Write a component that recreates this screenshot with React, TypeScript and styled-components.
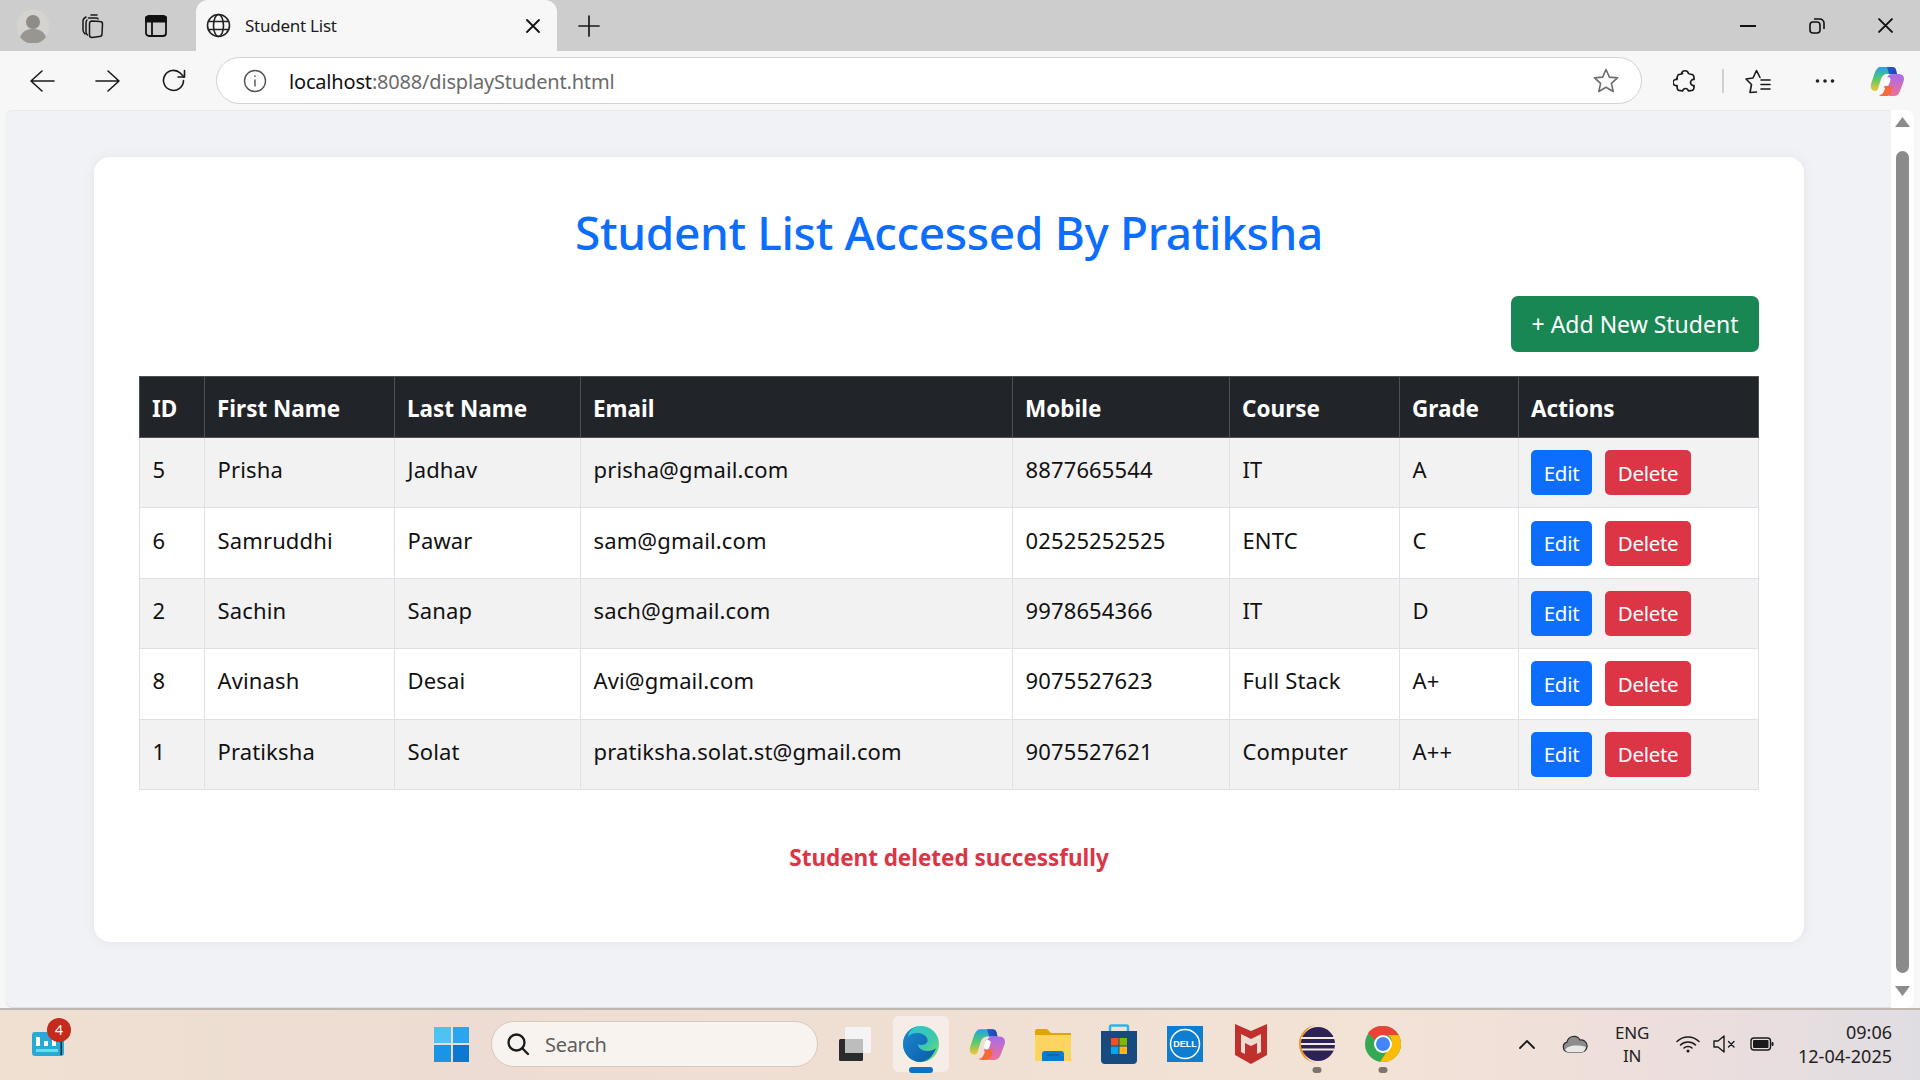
import React from "react";
import styled, { createGlobalStyle } from "styled-components";

const Global = createGlobalStyle`
  html, body { margin: 0; padding: 0; width: 1920px; height: 1080px; overflow: hidden; }
  body { font-family: "Noto Sans", "Open Sans", sans-serif; color: #212529; }
  * { box-sizing: border-box; }
`;

const Shell = styled.div`
  width: 1920px; height: 1080px; display: flex; flex-direction: column; overflow: hidden; background: #f7f7f7;
`;
const TabStrip = styled.div`
  height: 51px; flex: none; background: #cdcdcd; display: flex; align-items: center; padding-left: 7px; position: relative;
`;
const StripButton = styled.div<{ $w: number }>`
  width: ${p => p.$w}px; height: 51px; flex: none; display: flex; align-items: center; justify-content: center;
`;
const Tab = styled.div`
  width: 361px; height: 51px; flex: none; margin-left: 9px; background: #f7f7f7; border-radius: 12px 12px 0 0;
  display: flex; align-items: center; padding: 0 17px 0 10px;
`;
const TabTitle = styled.span`
  flex: 1; margin-left: 14px; font-size: 17px; letter-spacing: -0.25px; color: #1c1c1c;
`;
const WindowControls = styled.div`
  margin-left: auto; display: flex; height: 51px;
`;
const WinButton = styled.div`
  width: 69px; height: 51px; display: flex; align-items: center; justify-content: center;
`;
const Toolbar = styled.div`
  height: 59px; flex: none; background: #f7f7f7; display: flex; align-items: center; padding-left: 9px;
`;
const NavButton = styled.div`
  width: 66px; height: 46px; flex: none; display: flex; align-items: center; justify-content: center;
`;
const AddressBar = styled.div`
  width: 1426px; height: 47px; margin-left: 9px; flex: none; background: #fff; border: 1.5px solid #d2d2d2; border-radius: 24px;
  display: flex; align-items: center; padding: 0 22px 0 26px;
`;
const Url = styled.div`
  flex: 1; margin-left: 22px; padding-top: 1px; font-size: 20px; letter-spacing: -0.18px; color: #6b6b6b;
  b { font-weight: 400; color: #111; }
`;
const ToolSlot = styled.div<{ $w: number; $m?: number }>`
  width: ${p => p.$w}px; margin-left: ${p => p.$m ?? 0}px; height: 46px; flex: none; display: flex; align-items: center; justify-content: center;
`;
const ToolDivider = styled.div`
  width: 2px; height: 24px; flex: none; background: #d0d0d0;
`;
const Viewport = styled.div`
  flex: 1; min-height: 0; display: flex; background: #f7f7f7;
`;
const Page = styled.main`
  flex: 1; min-width: 0; margin-left: 5px; height: 898px; background: #f0f2f5; border-radius: 8px 0 0 8px; border-top: 1px solid #e9e9e9;
  border-bottom: 1px solid #dfdfdf; padding: 46px 87px 0 89px;
`;
const Card = styled.section`
  height: 785px; background: #fff; border-radius: 16px; padding: 44px 45px 0; box-shadow: 0 0 14px rgba(0,0,0,.06);
`;
const Title = styled.h1`
  margin: 0; height: 71px; line-height: 62px; text-align: center; font-size: 46px; font-weight: 500; letter-spacing: -0.35px; color: #0d6efd;
`;
const ActionRow = styled.div`
  display: flex; justify-content: flex-end; margin-top: 24px; height: 56px;
`;
const AddButton = styled.button`
  width: 248px; height: 56px; border: 0; border-radius: 7px; background: #198754; color: #fff; font: inherit; font-size: 23px; letter-spacing: 0;
`;
const Table = styled.table`
  width: 1619px; margin-top: 24px; border-collapse: collapse; table-layout: fixed; font-size: 22px; letter-spacing: 0.14px;
`;
const HeadCell = styled.th`
  height: 61px; padding: 2px 12px 0; text-align: left; background: #212529; color: #fff; border: 1.5px solid #4d5154; font-weight: 700; font-size: 22.5px; letter-spacing: 0;
`;
const Row = styled.tr<{ $odd: boolean }>`
  background: ${p => (p.$odd ? "#f2f2f2" : "#fff")};
`;
const Cell = styled.td`
  height: 70.4px; padding: 0 12px 7px 12.5px; border: 1.5px solid #dee2e6; color: #111;
`;
const ActionCell = styled(Cell)`
  padding: 0 12px;
`;
const ActionGroup = styled.div`
  display: flex; gap: 13px;
`;
const SmallButton = styled.button<{ $c: string; $w: number }>`
  width: ${p => p.$w}px; height: 45px; border: 0; border-radius: 5px; background: ${p => p.$c}; color: #fff; font: inherit; font-size: 20.5px; letter-spacing: -0.3px;
`;
const Message = styled.p`
  margin: 52px 0 0; text-align: center; font-size: 22.5px; font-weight: 700; letter-spacing: -0.04px; color: #dc3545;
`;
const Scrollbar = styled.div`
  width: 23px; flex: none; height: 898px; background: #fff; margin-right: 6px; border-radius: 0 8px 8px 0; padding-top: 7px;
  display: flex; flex-direction: column; align-items: center;
`;
const ScrollThumb = styled.div`
  width: 13px; height: 822px; margin: 24px 0 13px; border-radius: 7px; background: #8b8b8b;
`;
const Taskbar = styled.footer`
  height: 72px; flex: none; border-top: 2px solid #bfb7b1; display: flex; align-items: center; position: relative; padding-bottom: 2px;
  background: linear-gradient(90deg, #efe0d2 0%, #ecdcd3 25%, #f0e0d3 50%, #f3e2d6 72%, #ecdedd 88%, #e0dde2 100%);
`;
const Widgets = styled.div`
  width: 434px; flex: none; padding: 0 0 0 32px; display: flex; align-items: center; position: relative; height: 68px;
`;
const Badge = styled.span`
  position: absolute; left: 47px; top: 8px; width: 24px; height: 24px; border-radius: 50%; background: #c42b1c; color: #fff;
  font-size: 14px; line-height: 24px; text-align: center;
`;
const Start = styled.div`
  width: 35px; height: 35px; flex: none; display: grid; grid-template-columns: 1fr 1fr; gap: 2px;
`;
const Pane = styled.i<{ $c: string }>`
  display: block; background: ${p => p.$c};
`;
const Search = styled.div`
  width: 327px; height: 46px; margin-left: 22px; flex: none; border-radius: 23px; background: #f8f3ee; border: 1.5px solid #d5c9bf;
  display: flex; align-items: center; padding-left: 14px;
`;
const SearchText = styled.span`
  margin-left: 15px; font-size: 20px; letter-spacing: -0.3px; color: #5e5e5e;
`;
const Apps = styled.div`
  display: flex; align-items: center; margin-left: 4px; height: 68px;
`;
const AppSlot = styled.div<{ $active?: boolean }>`
  width: 66px; height: 56px; flex: none; display: flex; align-items: center; justify-content: center; position: relative;
  &::before { content: ""; position: absolute; inset: 0 5px; border-radius: 6px; background: ${p => (p.$active ? "#f6ede7" : "transparent")}; }
  > svg { position: relative; }
`;
const Dot = styled.span<{ $active?: boolean }>`
  position: absolute; bottom: -1px; left: 50%; transform: translateX(-50%); height: 6px; border-radius: 3px;
  width: ${p => (p.$active ? 24 : 9)}px; background: ${p => (p.$active ? "#0a72c9" : "#7c756f")};
`;
const Tray = styled.div`
  margin-left: auto; display: flex; align-items: center; padding-right: 28px; height: 68px;
`;
const TrayIcon = styled.div<{ $w: number }>`
  width: ${p => p.$w}px; display: flex; justify-content: center; flex: none;
`;
const Lang = styled.div`
  width: 68px; text-align: center; font-size: 17px; line-height: 23px; letter-spacing: -0.2px; color: #222;
`;
const Clock = styled.div`
  margin-left: 14px; text-align: right; font-size: 18px; line-height: 24px; color: #222; letter-spacing: 0;
`;

const S = { fill: "none", stroke: "#1a1a1a", strokeWidth: 1.6, strokeLinecap: "round" as const, strokeLinejoin: "round" as const };

const Avatar = () => (
  <svg width="34" height="34" viewBox="0 0 34 34"><circle cx="17" cy="17" r="16.5" fill="#d5d3d0" /><circle cx="17" cy="13" r="7" fill="#8f8c88" /><path d="M4 28c3-7 8-8 13-8s10 1 13 8a16 16 0 0 1-26 0z" fill="#999691" /></svg>
);
const Collections = () => (
  <svg width="26" height="26" viewBox="0 0 26 26" {...S} strokeWidth={1.5}><path d="M12 2h6M7 4c-2 1-3 2-3 4v9c0 2 1 3 2 4M9.500 5h8c1 0 1.500.5 1.500 1M8 7c-1 1-1 2-1 3v9c0 1 .5 2 1.500 3" /><path d="M13 8l8 .5c1.500 0 2.500 1 2.500 2.500l-.5 10c0 1.500-1 2.500-2.500 2.500l-7.500 1c-1.500 0-2.500-1-2.500-2.500v-11c0-1.500 1-3 2.500-3z" /></svg>
);
const TabsIcon = () => (
  <svg width="24" height="24" viewBox="0 0 24 24" fill="none" stroke="#111" strokeWidth="1.8"><rect x="2" y="2" width="20" height="20" rx="3" /><path d="M2 3.500h20v4H2z" fill="#111" /><path d="M8 8v14" /></svg>
);
const Globe = () => (
  <svg width="25" height="25" viewBox="0 0 25 25" {...S} stroke="#222"><circle cx="12.500" cy="12.500" r="11" /><ellipse cx="12.500" cy="12.500" rx="5" ry="11" /><path d="M2.500 8.500h20M2.500 16.500h20" /></svg>
);
const X = ({ s = 14, w = 1.8 }: { s?: number; w?: number }) => (
  <svg width={s} height={s} viewBox="0 0 14 14" fill="none" stroke="#111" strokeWidth={w} strokeLinecap="round"><path d="M1 1l12 12M13 1L1 13" /></svg>
);
const Plus = () => (
  <svg width="22" height="22" viewBox="0 0 22 22" {...S} strokeWidth={1.7}><path d="M11 1v20M1 11h20" /></svg>
);
const Back = ({ flip }: { flip?: boolean }) => (
  <svg width="26" height="24" viewBox="0 0 26 24" {...S} style={flip ? { transform: "scaleX(-1)" } : undefined}><path d="M13 2L2 12l11 10M2 12h23" /></svg>
);
const Refresh = () => (
  <svg width="26" height="26" viewBox="0 0 26 26" {...S}><path d="M22.500 12.500a10 10 0 1 1-3-7.200L23 9" /><path d="M23.500 2.500V9h-6.500" /></svg>
);
const Info = () => (
  <svg width="24" height="24" viewBox="0 0 24 24" fill="none" stroke="#555" strokeWidth="1.400"><circle cx="12" cy="12" r="10.500" /><path d="M12 10.500v7M12 6.500v1.600" /></svg>
);
const Star = () => (
  <svg width="26" height="25" viewBox="0 0 26 25" fill="none" stroke="#6d6d6d" strokeWidth="1.600" strokeLinejoin="round"><path d="M13 1.500l3.400 7.600 8.100.8-6.100 5.500 1.800 8.100-7.200-4.200-7.200 4.200 1.800-8.100L1.500 9.900l8.100-.8z" /></svg>
);
const Puzzle = () => (
  <svg width="24" height="26" viewBox="0 0 24 26" {...S} strokeWidth={1.700}><path d="M8.500 5.500a3.600 3.600 0 0 1 7 0c1 1 3 .5 4.500 1.500 1.500 1.500 1 3 1 4.500-1.500-.5-3.500 1-3.500 3s2 3.500 3.500 3c0 1.500.5 3-1 4.500-1.500 1-3 .5-4.500 1-.5-1.500-1.500-2.500-3-2.500s-2.500 1-3 2.500c-1.500-.5-3 0-4.500-1-1-1-1-3-1-4.500-1.500.5-4-.5-4-3s2.500-3.500 4-3c0-1.500 0-3.500 1-4.500 1.500-1 3-.5 4.500-1.500z" /></svg>
);
const FavList = () => (
  <svg width="26" height="26" viewBox="0 0 26 26" {...S}><path d="M11.500 24l-6.500.5 1.500-8L1 11l7-1 3.500-7.500 3.500 7M16 12h9M16 16.500h9M16 21h9" /></svg>
);
const Dots = () => (
  <svg width="20" height="6" viewBox="0 0 20 6" fill="#222"><circle cx="2.500" cy="3" r="1.800" /><circle cx="10" cy="3" r="1.800" /><circle cx="17.500" cy="3" r="1.800" /></svg>
);
const Copilot = ({ id, s = 34 }: { id: string; s?: number }) => (
  <svg width={s} height={s} viewBox="0 0 34 34">
    <defs>
      <linearGradient id={id + "a"} x1="0" y1="0" x2="0" y2="1"><stop offset="0" stopColor="#1aa5e8" /><stop offset=".5" stopColor="#58c96a" /><stop offset="1" stopColor="#f5c63c" /></linearGradient>
      <linearGradient id={id + "b"} x1="0" y1="0" x2="0" y2="1"><stop offset="0" stopColor="#a86bea" /><stop offset="1" stopColor="#f0709a" /></linearGradient>
      <linearGradient id={id + "c"} x1="0" y1="0" x2="1" y2="0"><stop offset="0" stopColor="#1a5fd0" /><stop offset="1" stopColor="#2a3fb0" /></linearGradient>
    </defs>
    <path d="M10 3h12c2 0 3.500 1 4 3l1 4H17c-3 0-5 2-6 5l-3 10c-.5 1.500-1.500 2-3 2-3 0-5-3-4-7l4-12C6.500 5 8 3 10 3z" fill={`url(#${id}a)`} />
    <path d="M17 3h5c2 0 3.500 1 4 3l1 4h-8l-2-7z" fill={`url(#${id}c)`} />
    <path d="M24 24H14l3-10c1-3 3-4 5-4h6c3 0 6 1 6 5 0 1-.5 3-1 4l-3 8c-1 3-3 5-6 5h-5l2-8z" fill={`url(#${id}b)`} />
    <path d="M12 32c-1 0-2 0-3-1 2 0 4-1 5-4l2-5h7l-2 7c-1 2-2 3-4 3z" fill="#f46a3a" />
    <rect x="15" y="13" width="5" height="9" rx="2.500" transform="rotate(18 17 17)" fill="#fff" />
  </svg>
);
const WidgetsIcon = () => (
  <svg width="32" height="24" viewBox="0 0 32 24"><rect width="32" height="24" rx="3" fill="#2aa8d8" /><path d="M4 5h4v9H4zM12 9h4v5h-4zM20 8h4v6h-4z" fill="#fff" /><rect x="4" y="17" width="22" height="3" fill="#62e0ee" /><rect x="28.500" y="3" width="1.500" height="20" fill="#123" /></svg>
);
const SearchIcon = () => (
  <svg width="24" height="24" viewBox="0 0 24 24" fill="none" stroke="#1a1a1a" strokeWidth="2.300" strokeLinecap="round"><circle cx="10.500" cy="10.500" r="8" /><path d="M16.500 16.500l5.500 5.500" /></svg>
);
const TaskView = () => (
  <svg width="32" height="34" viewBox="0 0 32 34"><rect x="0" y="12" width="24" height="22" rx="1.500" fill="#2b2b2b" /><rect x="6" y="0" width="26" height="26" rx="1.500" fill="#f4f4f4" /><rect x="6" y="12" width="18" height="14" fill="#bdbdbd" /></svg>
);
const Edge = () => (
  <svg width="36" height="38" viewBox="0 0 36 38">
    <defs>
      <linearGradient id="ea" x1="0" y1="0" x2="1" y2="1"><stop offset="0" stopColor="#2bc4d8" /><stop offset=".6" stopColor="#3fc9a8" /><stop offset="1" stopColor="#7fe36a" /></linearGradient>
      <linearGradient id="eb" x1="0" y1="0" x2="1" y2="1"><stop offset="0" stopColor="#1c8ad0" /><stop offset="1" stopColor="#0c5aa8" /></linearGradient>
    </defs>
    <circle cx="18" cy="19" r="18" fill="url(#ea)" />
    <path d="M0 19C0 9 8 1 18 1c-8 0-13 6-13 11 3-5 15-6 19 1 2 4-1 7-6 7-2 0-3-1-3-1 0 4 4 7 9 7 4 0 7-1 9-3-3 9-10 14-16 14C8 37 0 29 0 19z" fill="url(#eb)" />
  </svg>
);
const Folder = () => (
  <svg width="36" height="36" viewBox="0 0 36 36"><path d="M0 5a2 2 0 0 1 2-2h10l4 4h20v28H0z" fill="#e3a400" /><path d="M0 9h36v26H0z" fill="#fcd560" /><path d="M7 35v-7a3 3 0 0 1 3-3h16a3 3 0 0 1 3 3v7z" fill="#0a7cd0" /><path d="M12 29h12" stroke="#0a5aa0" strokeWidth="1.200" /></svg>
);
const Store = () => (
  <svg width="36" height="40" viewBox="0 0 36 40"><path d="M9 7V3a1.500 1.500 0 0 1 1.500-1.500h15A1.500 1.500 0 0 1 27 3v4" fill="none" stroke="#2bb5ea" strokeWidth="2.500" /><path d="M0 7h36v29a4 4 0 0 1-4 4H4a4 4 0 0 1-4-4z" fill="#174b80" /><rect x="10" y="14" width="7.500" height="7.500" fill="#f25022" /><rect x="18.500" y="14" width="7.500" height="7.500" fill="#7fba00" /><rect x="10" y="22.500" width="7.500" height="7.500" fill="#00a4ef" /><rect x="18.500" y="22.500" width="7.500" height="7.500" fill="#ffb900" /></svg>
);
const Dell = () => (
  <svg width="36" height="36" viewBox="0 0 36 36"><rect width="36" height="36" fill="#0f7dd0" /><circle cx="18" cy="18" r="14.500" fill="none" stroke="#fff" strokeWidth="1.500" /><text x="18" y="21" textAnchor="middle" fontSize="9" fontWeight="700" fill="#fff" fontFamily="Liberation Sans, sans-serif">DELL</text></svg>
);
const McAfee = () => (
  <svg width="32" height="40" viewBox="0 0 32 40"><path d="M0 0l16 7 16-7v31L16 40 0 31z" fill="#c0302c" /><path d="M6 10l10 5 10-5v18l-4 2V19l-6 3-6-3v11l-4-2z" fill="#efdcd0" /></svg>
);
const Eclipse = () => (
  <svg width="36" height="38" viewBox="0 0 36 38"><path d="M19 0C8 0 0 8 0 19s8 19 19 19C10 38 3 30 3 19S10 0 19 0z" fill="#f0962a" /><circle cx="19" cy="19" r="17" fill="#2c2255" /><path d="M2 13h34M2 19h34M3 24.500h32" stroke="#f3ebe3" strokeWidth="2.200" /></svg>
);
const Chrome = () => (
  <svg width="36" height="36" viewBox="0 0 36 36"><circle cx="18" cy="18" r="18" fill="#34a853" /><path d="M18 0a18 18 0 0 1 15.600 9H18a9 9 0 0 0-8 5L3 7A18 18 0 0 1 18 0z" fill="#ea4335" /><path d="M33.600 9A18 18 0 0 1 15 35.800L23 24a9 9 0 0 0 0-15z" fill="#fbbc04" /><circle cx="18" cy="18" r="9" fill="#fff" /><circle cx="18" cy="18" r="7" fill="#4285f4" /></svg>
);
const Chevron = () => (
  <svg width="16" height="10" viewBox="0 0 16 10" {...S} strokeWidth={1.800}><path d="M1 9l7-7 7 7" /></svg>
);
const Cloud = () => (
  <svg width="26" height="18" viewBox="0 0 26 18"><path d="M6 17a5 5 0 0 1-1-9.800A7 7 0 0 1 18 5a5.500 5.500 0 0 1 2 12z" fill="#8d8d8d" stroke="#2a2a2a" strokeWidth="1.200" /><path d="M3 15c2-4 10-6 21-3-1 3-2 5-4 5H6c-1 0-2-1-3-2z" fill="#e8e8e8" /></svg>
);
const Wifi = () => (
  <svg width="24" height="18" viewBox="0 0 24 18" fill="none" stroke="#1a1a1a" strokeWidth="1.500" strokeLinecap="round"><path d="M1 6.500c6-6 16-6 22 0M4.500 10c4-4 11-4 15 0M8 13c2-2 6-2 8 0" /><circle cx="12" cy="16" r="1.500" fill="#1a1a1a" stroke="none" /></svg>
);
const Mute = () => (
  <svg width="24" height="18" viewBox="0 0 24 18" {...S} strokeWidth={1.400}><path d="M1 6h4l6-5v16l-6-5H1zM15.500 6.500l5.500 5.500M21 6.500L15.500 12" /></svg>
);
const Battery = () => (
  <svg width="24" height="14" viewBox="0 0 24 14" fill="none"><rect x="1" y="1" width="19.500" height="12" rx="3" stroke="#1a1a1a" strokeWidth="1.400" /><rect x="3" y="3" width="15.500" height="8" rx="1" fill="#1a1a1a" /><rect x="21.500" y="5" width="2" height="4" rx="1" fill="#1a1a1a" /></svg>
);

const students = [
  ["5", "Prisha", "Jadhav", "prisha@gmail.com", "8877665544", "IT", "A"],
  ["6", "Samruddhi", "Pawar", "sam@gmail.com", "02525252525", "ENTC", "C"],
  ["2", "Sachin", "Sanap", "sach@gmail.com", "9978654366", "IT", "D"],
  ["8", "Avinash", "Desai", "Avi@gmail.com", "9075527623", "Full Stack", "A+"],
  ["1", "Pratiksha", "Solat", "pratiksha.solat.st@gmail.com", "9075527621", "Computer", "A++"],
];
const heads = ["ID", "First Name", "Last Name", "Email", "Mobile", "Course", "Grade", "Actions"];
const widths = [65, 190, 186, 432, 217, 170, 119, 240];

export default function App() {
  return (
    <Shell>
      <Global />
      <TabStrip>
        <StripButton $w={52}><Avatar /></StripButton>
        <StripButton $w={66}><Collections /></StripButton>
        <StripButton $w={62}><TabsIcon /></StripButton>
        <Tab>
          <Globe />
          <TabTitle>Student List</TabTitle>
          <X />
        </Tab>
        <StripButton $w={64}><Plus /></StripButton>
        <WindowControls>
          <WinButton><svg width="16" height="2" viewBox="0 0 16 2"><rect width="16" height="2" fill="#111" /></svg></WinButton>
          <WinButton><svg width="16" height="16" viewBox="0 0 16 16" fill="none" stroke="#111" strokeWidth="1.600"><rect x="1" y="4" width="10" height="11" rx="3" /><path d="M5 1h6c2 0 4 2 4 4v6" /></svg></WinButton>
          <WinButton><X s={15} /></WinButton>
        </WindowControls>
      </TabStrip>
      <Toolbar>
        <NavButton><Back /></NavButton>
        <NavButton><Back flip /></NavButton>
        <NavButton><Refresh /></NavButton>
        <AddressBar>
          <Info />
          <Url><b>localhost</b>:8088/displayStudent.html</Url>
          <Star />
        </AddressBar>
        <ToolSlot $w={74} $m={6}><Puzzle /></ToolSlot>
        <ToolDivider />
        <ToolSlot $w={68}><FavList /></ToolSlot>
        <ToolSlot $w={66}><Dots /></ToolSlot>
        <ToolSlot $w={58}><Copilot id="c1" /></ToolSlot>
      </Toolbar>
      <Viewport>
        <Page>
          <Card>
            <Title>Student List Accessed By Pratiksha</Title>
            <ActionRow><AddButton>+ Add New Student</AddButton></ActionRow>
            <Table>
              <colgroup>{widths.map((w, i) => <col key={i} width={w} />)}</colgroup>
              <thead><tr>{heads.map(h => <HeadCell key={h}>{h}</HeadCell>)}</tr></thead>
              <tbody>
                {students.map((s, i) => (
                  <Row key={s[0]} $odd={i % 2 === 0}>
                    {s.map((v, j) => <Cell key={j}>{v}</Cell>)}
                    <ActionCell>
                      <ActionGroup>
                        <SmallButton $c="#0d6efd" $w={61}>Edit</SmallButton>
                        <SmallButton $c="#dc3545" $w={86}>Delete</SmallButton>
                      </ActionGroup>
                    </ActionCell>
                  </Row>
                ))}
              </tbody>
            </Table>
            <Message>Student deleted successfully</Message>
          </Card>
        </Page>
        <Scrollbar>
          <svg width="15" height="10" viewBox="0 0 15 10"><path d="M7.500 0L15 10H0z" fill="#8b8b8b" /></svg>
          <ScrollThumb />
          <svg width="15" height="10" viewBox="0 0 15 10"><path d="M7.500 10L15 0H0z" fill="#8b8b8b" /></svg>
        </Scrollbar>
      </Viewport>
      <Taskbar>
        <Widgets>
          <WidgetsIcon />
          <Badge>4</Badge>
        </Widgets>
        <Start>
          <Pane $c="#4cc2f5" /><Pane $c="#29a6ee" /><Pane $c="#1a94e6" /><Pane $c="#0b78d4" />
        </Start>
        <Search><SearchIcon /><SearchText>Search</SearchText></Search>
        <Apps>
          <AppSlot><TaskView /></AppSlot>
          <AppSlot $active><Edge /><Dot $active /></AppSlot>
          <AppSlot><Copilot id="c2" s={36} /></AppSlot>
          <AppSlot><Folder /></AppSlot>
          <AppSlot><Store /></AppSlot>
          <AppSlot><Dell /></AppSlot>
          <AppSlot><McAfee /></AppSlot>
          <AppSlot><Eclipse /><Dot /></AppSlot>
          <AppSlot><Chrome /><Dot /></AppSlot>
        </Apps>
        <Tray>
          <TrayIcon $w={50}><Chevron /></TrayIcon>
          <TrayIcon $w={46}><Cloud /></TrayIcon>
          <Lang>ENG<br />IN</Lang>
          <TrayIcon $w={44}><Wifi /></TrayIcon>
          <TrayIcon $w={30}><Mute /></TrayIcon>
          <TrayIcon $w={44}><Battery /></TrayIcon>
          <Clock>09:06<br />12-04-2025</Clock>
        </Tray>
      </Taskbar>
    </Shell>
  );
}
